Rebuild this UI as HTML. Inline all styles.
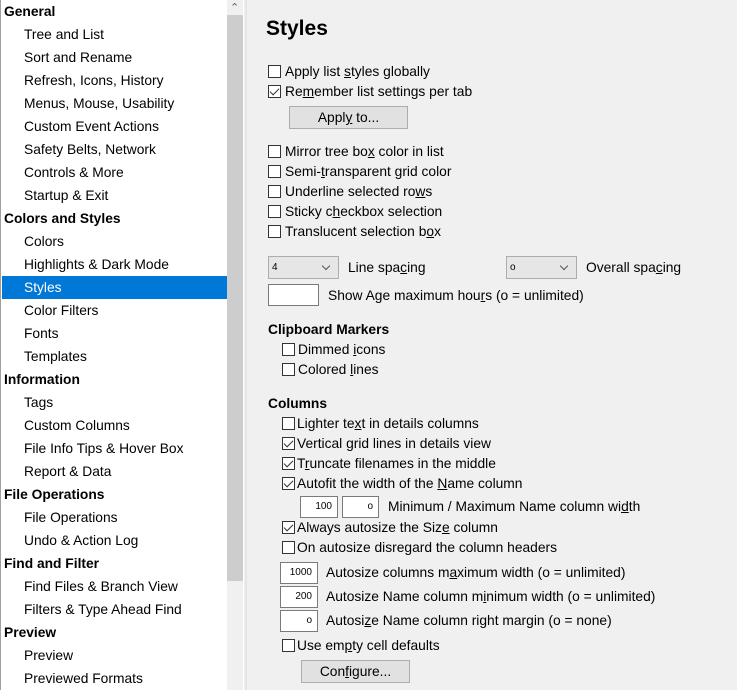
<!DOCTYPE html>
<html><head><meta charset="utf-8"><style>
*{margin:0;padding:0;box-sizing:border-box}
body{width:737px;height:690px;overflow:hidden;background:#f0f0f0;font-family:"Liberation Sans",sans-serif;font-size:13.8px;color:#000;position:relative}
.a{position:absolute;white-space:nowrap;height:22px;line-height:22px}
#side{position:absolute;left:0;top:0;width:244px;height:690px;background:#fff;border-left:1px solid #a0a0a0}
.h{font-weight:bold;left:4px}
.i{left:24px}
.sel{position:absolute;left:2px;top:276px;width:225px;height:23px;background:#0078d7}
#sb{position:absolute;left:227px;top:0;width:16px;height:690px;background:#f0f0f0}
#th{position:absolute;left:227px;top:15px;width:16px;height:566px;background:#cdcdcd}
#sep{position:absolute;left:245px;top:0;width:2px;height:690px;background:#e6e6e6}
.cb{position:absolute;width:13px;height:13px;border:1px solid #333;background:#fff}
.ck::after{content:"";position:absolute;left:3px;top:0px;width:4px;height:8px;border:solid #333;border-width:0 1.4px 1.4px 0;transform:rotate(45deg)}
.btn{position:absolute;background:#e1e1e1;border:1px solid #adadad;text-align:center;line-height:22px}
.in{position:absolute;background:#fff;border:1px solid #7a7a7a;text-align:right;padding-right:5px;font-size:10px;line-height:20px}
.cmb{position:absolute;background:#e6e6e6;border:1px solid #adadad;font-size:10px;line-height:21px;padding-left:3px}
.cmb::after{content:"";position:absolute;right:9px;top:6px;width:5px;height:5px;border:solid #555;border-width:0 1px 1px 0;transform:rotate(45deg)}
.b{font-weight:bold}
u{text-decoration:underline}
</style></head><body>
<div id="side"></div>
<div class="sel"></div>
<div id="sb"></div><div id="th"></div>
<div class="a" style="left:230px;top:-3px;font-size:11px;color:#606060">&#8963;</div>
<div id="sep"></div>

<div class="a h" style="top:1px">General</div>
<div class="a i" style="top:24px">Tree and List</div>
<div class="a i" style="top:47px">Sort and Rename</div>
<div class="a i" style="top:70px">Refresh, Icons, History</div>
<div class="a i" style="top:93px">Menus, Mouse, Usability</div>
<div class="a i" style="top:116px">Custom Event Actions</div>
<div class="a i" style="top:139px">Safety Belts, Network</div>
<div class="a i" style="top:162px">Controls &amp; More</div>
<div class="a i" style="top:185px">Startup &amp; Exit</div>
<div class="a h" style="top:208px">Colors and Styles</div>
<div class="a i" style="top:231px">Colors</div>
<div class="a i" style="top:254px">Highlights &amp; Dark Mode</div>
<div class="a i" style="top:277px;color:#fff">Styles</div>
<div class="a i" style="top:300px">Color Filters</div>
<div class="a i" style="top:323px">Fonts</div>
<div class="a i" style="top:346px">Templates</div>
<div class="a h" style="top:369px">Information</div>
<div class="a i" style="top:392px">Tags</div>
<div class="a i" style="top:415px">Custom Columns</div>
<div class="a i" style="top:438px">File Info Tips &amp; Hover Box</div>
<div class="a i" style="top:461px">Report &amp; Data</div>
<div class="a h" style="top:484px">File Operations</div>
<div class="a i" style="top:507px">File Operations</div>
<div class="a i" style="top:530px">Undo &amp; Action Log</div>
<div class="a h" style="top:553px">Find and Filter</div>
<div class="a i" style="top:576px">Find Files &amp; Branch View</div>
<div class="a i" style="top:599px">Filters &amp; Type Ahead Find</div>
<div class="a h" style="top:622px">Preview</div>
<div class="a i" style="top:645px">Preview</div>
<div class="a i" style="top:668px">Previewed Formats</div>

<div class="a b" style="left:266px;top:15px;font-size:21px;height:28px;line-height:28px">Styles</div>

<div class="cb" style="left:268px;top:65px"></div><div class="a" style="left:285px;top:61px">Apply list <u>s</u>tyles globally</div>
<div class="cb ck" style="left:268px;top:85px"></div><div class="a" style="left:285px;top:81px">Re<u>m</u>ember list settings per tab</div>
<div class="btn" style="left:289px;top:106px;width:119px;height:23px">Appl<u>y</u> to...</div>

<div class="cb" style="left:268px;top:145px"></div><div class="a" style="left:285px;top:141px">Mirror tree bo<u>x</u> color in list</div>
<div class="cb" style="left:268px;top:165px"></div><div class="a" style="left:285px;top:161px">Semi-<u>t</u>ransparent grid color</div>
<div class="cb" style="left:268px;top:185px"></div><div class="a" style="left:285px;top:181px">Underline selected ro<u>w</u>s</div>
<div class="cb" style="left:268px;top:205px"></div><div class="a" style="left:285px;top:201px">Sticky c<u>h</u>eckbox selection</div>
<div class="cb" style="left:268px;top:225px"></div><div class="a" style="left:285px;top:221px">Translucent selection b<u>o</u>x</div>

<div class="cmb" style="left:268px;top:256px;width:71px;height:23px">4</div>
<div class="a" style="left:348px;top:257px">Line spa<u>c</u>ing</div>
<div class="cmb" style="left:506px;top:256px;width:71px;height:23px">o</div>
<div class="a" style="left:586px;top:257px">Overall spa<u>c</u>ing</div>
<div class="in" style="left:268px;top:284px;width:51px;height:22px"></div>
<div class="a" style="left:328px;top:285px">Show Age maximum hou<u>r</u>s (o = unlimited)</div>

<div class="a b" style="left:268px;top:319px">Clipboard Markers</div>
<div class="cb" style="left:282px;top:343px"></div><div class="a" style="left:298px;top:339px">Dimmed <u>i</u>cons</div>
<div class="cb" style="left:282px;top:363px"></div><div class="a" style="left:298px;top:359px">Colored <u>l</u>ines</div>

<div class="a b" style="left:268px;top:393px">Columns</div>
<div class="cb" style="left:282px;top:417px"></div><div class="a" style="left:297px;top:413px">Lighter te<u>x</u>t in details columns</div>
<div class="cb ck" style="left:282px;top:437px"></div><div class="a" style="left:297px;top:433px">Vertical grid lines in details view</div>
<div class="cb ck" style="left:282px;top:457px"></div><div class="a" style="left:297px;top:453px">T<u>r</u>uncate filenames in the middle</div>
<div class="cb ck" style="left:282px;top:477px"></div><div class="a" style="left:297px;top:473px">Autofit the width of the <u>N</u>ame column</div>
<div class="in" style="left:300px;top:496px;width:38px;height:22px">100</div>
<div class="in" style="left:342px;top:496px;width:37px;height:22px">o</div>
<div class="a" style="left:388px;top:496px">Minimum / Maximum Name column wi<u>d</u>th</div>
<div class="cb ck" style="left:282px;top:521px"></div><div class="a" style="left:297px;top:517px">Always autosize the Siz<u>e</u> column</div>
<div class="cb" style="left:282px;top:541px"></div><div class="a" style="left:297px;top:537px">On autosize disre<u>g</u>ard the column headers</div>
<div class="in" style="left:280px;top:562px;width:38px;height:22px">1000</div>
<div class="a" style="left:326px;top:562px">Autosize columns m<u>a</u>ximum width (o = unlimited)</div>
<div class="in" style="left:280px;top:586px;width:38px;height:22px">200</div>
<div class="a" style="left:326px;top:586px">Autosize Name column m<u>i</u>nimum width (o = unlimited)</div>
<div class="in" style="left:280px;top:610px;width:38px;height:22px">o</div>
<div class="a" style="left:326px;top:610px">Autosi<u>z</u>e Name column right margin (o = none)</div>
<div class="cb" style="left:282px;top:639px"></div><div class="a" style="left:297px;top:635px">Use em<u>p</u>ty cell defaults</div>
<div class="btn" style="left:301px;top:660px;width:109px;height:23px">Con<u>f</u>igure...</div>
</body></html>
